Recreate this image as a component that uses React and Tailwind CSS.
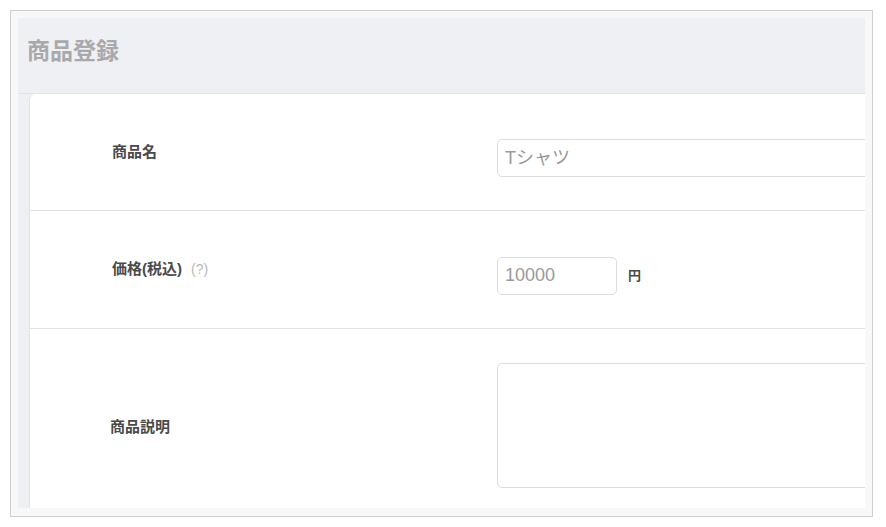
export default function App() {
  const font = { fontFamily: '"Liberation Sans", "Noto Sans CJK JP", sans-serif' };
  return (
    <div className="w-[886px] h-[527px] bg-white pt-[10px] pl-[10px]" style={font}>
      <div className="w-[863px] h-[507px] border border-[#cfcfcf] bg-[#f8f8f9] p-[7px] pb-[8px]">
        <div className="h-full bg-[#eff0f3] flex flex-col overflow-hidden">
          <div className="h-[76px] shrink-0 flex items-center pl-[9px] border-b border-[#e2e3e6]">
            <h1 className="text-[23px] font-bold text-[#a9a9ab] -mt-[8px]">商品登録</h1>
          </div>
          <div className="ml-[11px] w-[900px] flex-1 bg-white rounded-tl-[6px] border-l border-[#e3e3e6] flex flex-col">
            <div className="h-[117px] shrink-0 flex items-center border-b border-[#e2e2e2]">
              <div className="w-[467px] pl-[82px] text-[15px] font-semibold text-[#4a4a4a]">商品名</div>
              <div className="flex-1 mt-[12px]">
                <div className="h-[38px] border border-[#dcdcdc] rounded-[5px] flex items-center pl-[7px] text-[18px] text-[#9a9a9a]">Tシャツ</div>
              </div>
            </div>
            <div className="h-[118px] shrink-0 flex items-center border-b border-[#e2e2e2]">
              <div className="w-[467px] pl-[82px] text-[15px] font-semibold text-[#4a4a4a]">
                価格(税込)<span className="ml-[9px] text-[14px] font-normal text-[#b9b9b9]">(?)</span>
              </div>
              <div className="flex-1 flex items-center mt-[12px]">
                <div className="w-[120px] h-[38px] border border-[#dcdcdc] rounded-[5px] flex items-center pl-[7px] text-[18px] text-[#9a9a9a]">10000</div>
                <span className="ml-[11px] text-[13px] font-semibold text-[#4a4a4a]">円</span>
              </div>
            </div>
            <div className="flex-1 flex items-start">
              <div className="w-[467px] pl-[80px] pt-[87px] text-[15px] font-semibold text-[#4a4a4a]">商品説明</div>
              <div className="flex-1 pt-[34px]">
                <div className="h-[125px] border border-[#dcdcdc] rounded-[5px]"></div>
              </div>
            </div>
          </div>
        </div>
      </div>
    </div>
  );
}
